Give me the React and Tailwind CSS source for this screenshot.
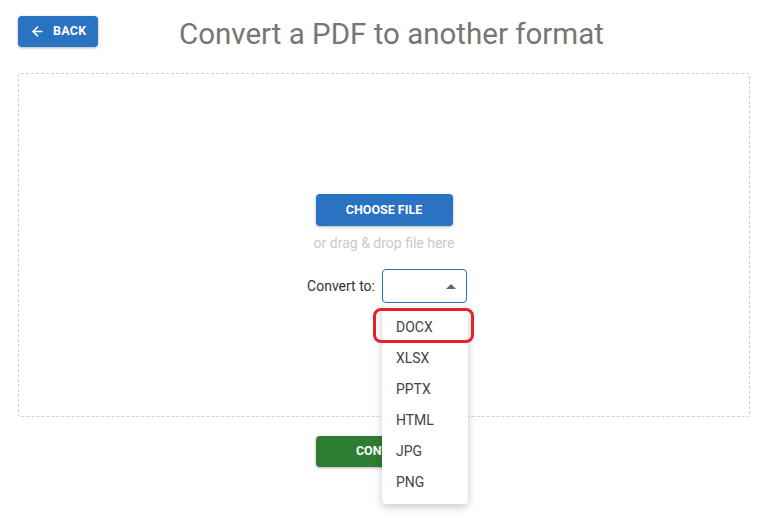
import React from 'react';
import { ArrowLeft } from 'lucide-react';

const formats = ['DOCX', 'XLSX', 'PPTX', 'HTML', 'JPG', 'PNG'];

const App = () => {
  return (
    <div className="w-[768px] h-[528px] bg-white overflow-hidden" style={{ fontFamily: 'Roboto, "Liberation Sans", sans-serif' }}>
      {/* header */}
      <div className="flex items-center h-[31px] px-[18px] mt-[16px]">
        <button className="flex items-center gap-[8px] h-[31px] w-[80px] pl-[12px] rounded-[4px] bg-[#2a72c2] text-white text-[12.5px] font-bold tracking-[0.3px] shadow-[0_1px_3px_rgba(0,0,0,0.3)]">
          <ArrowLeft size={15} strokeWidth={2.4} />
          BACK
        </button>
        <h1 className="ml-[81px] mt-[5px] text-[29.5px] leading-[31px] text-[#767676] font-normal whitespace-nowrap">
          Convert a PDF to another format
        </h1>
      </div>

      {/* drop area */}
      <div className="mx-[18px] mt-[26px] h-[344px] border border-dashed border-[#cfcfcf] rounded-[3px] flex flex-col items-center pt-[120px]">
        <button className="w-[137px] h-[32px] rounded-[4px] bg-[#2a72c2] text-white text-[12.5px] font-bold shadow-[0_1px_3px_rgba(0,0,0,0.3)]">
          CHOOSE FILE
        </button>
        <p className="mt-[7px] text-[14px] text-[#cacaca]">or drag &amp; drop file here</p>

        <div className="mt-[15px] flex items-center gap-[7px] pl-[6px]">
          <span className="text-[14px] text-[#333]">Convert to:</span>
          <div className="relative">
            <div className="w-[85px] h-[34px] rounded-[4px] border border-[#2a72c2] flex items-center justify-end pr-[10px]">
              <svg width="10" height="5" viewBox="0 0 10 5">
                <path d="M0 5 L5 0 L10 5 Z" fill="#666" />
              </svg>
            </div>

            {/* open menu */}
            <div className="absolute left-0 top-[38px] w-[86px] bg-white rounded-[4px] pt-[5px] pb-[6px] shadow-[0_3px_8px_rgba(0,0,0,0.22)] z-10">
              {formats.map((f) => (
                <div key={f} className="h-[31px] flex items-center pl-[14px] text-[14px] text-[#444]">
                  {f}
                </div>
              ))}
            </div>

            {/* highlight */}
            <div className="absolute left-[-9px] top-[39px] w-[101px] h-[35px] rounded-[8px] border-[3px] border-[#e8202a] z-20" />
          </div>
        </div>
      </div>

      <div className="flex justify-center mt-[19px]">
        <button className="w-[137px] h-[31px] rounded-[4px] bg-[#2e7d32] text-white text-[12.5px] font-bold shadow-[0_1px_3px_rgba(0,0,0,0.3)]">
          CONVERT
        </button>
      </div>
    </div>
  );
};

export default App;
